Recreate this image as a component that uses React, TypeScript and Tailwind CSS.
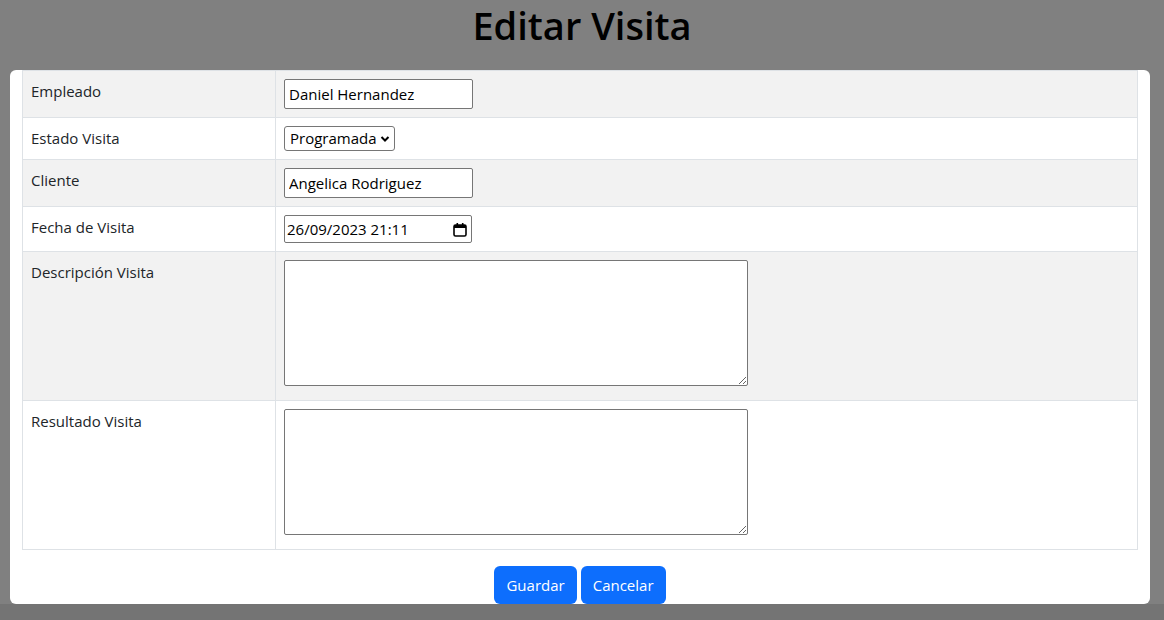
const font = { fontFamily: '"Open Sans", "Noto Sans", sans-serif' };

function Row({
  label,
  shaded,
  children,
}: {
  label: string;
  shaded?: boolean;
  children: React.ReactNode;
}) {
  return (
    <div className={`grid grid-cols-[253px_1fr] border-b border-[#dee2e6] ${shaded ? 'bg-[#f2f2f2]' : 'bg-white'}`}>
      <div className="border-r border-[#dee2e6] px-2 py-2 text-[15px] leading-6 text-[#212529]">{label}</div>
      <div className="px-2 py-2">{children}</div>
    </div>
  );
}

export default function App() {
  return (
    <div className="flex h-[620px] flex-col bg-[#808080]" style={font}>
      {/* Title */}
      <div className="flex h-[70px] items-start justify-center pt-[1px]">
        <h1 className="text-[38px] font-semibold leading-[48px] text-black">Editar Visita</h1>
      </div>

      {/* Card */}
      <div className="ml-[10px] mr-[14px] h-[534px] overflow-hidden rounded-md bg-white px-3">
        <div className="border-x border-t border-[#dee2e6]">
          <Row label="Empleado" shaded>
            <input
              type="text"
              defaultValue="Daniel Hernandez"
              className="h-[30px] w-[189px] rounded-[2px] border border-[#767676] bg-white px-1 text-[15px] text-black outline-none"
            />
          </Row>
          <Row label="Estado Visita">
            <div className="flex h-[25px] w-[111px] items-center justify-between rounded-[3px] border border-[#767676] bg-white pl-[5px] pr-1 text-[15px] text-black">
              <span>Programada</span>
              <svg width="10" height="8" viewBox="0 0 10 8">
                <path d="M1.5 2 L5 5.5 L8.5 2" fill="none" stroke="#000" strokeWidth="2" />
              </svg>
            </div>
          </Row>
          <Row label="Cliente" shaded>
            <input
              type="text"
              defaultValue="Angelica Rodriguez"
              className="h-[30px] w-[189px] rounded-[2px] border border-[#767676] bg-white px-1 text-[15px] text-black outline-none"
            />
          </Row>
          <Row label="Fecha de Visita">
            <div className="flex h-[28px] w-[188px] items-center justify-between rounded-[2px] border border-[#767676] bg-white pl-[2px] pr-[4px] text-[15px] text-black">
              <span>26/09/2023 21:11</span>
              <svg width="14" height="15" viewBox="0 0 14 15">
                <rect x="1" y="3" width="12" height="11" rx="1.5" fill="none" stroke="#000" strokeWidth="1.6" />
                <rect x="1" y="3" width="12" height="3" fill="#000" />
                <rect x="3.5" y="1" width="1.6" height="3" fill="#000" />
                <rect x="8.9" y="1" width="1.6" height="3" fill="#000" />
              </svg>
            </div>
          </Row>
          <Row label="Descripción Visita" shaded>
            <textarea className="mb-[6px] block h-[126px] w-[464px] resize rounded-[2px] border border-[#767676] bg-white outline-none" />
          </Row>
          <Row label="Resultado Visita">
            <textarea className="mb-[6px] block h-[126px] w-[464px] resize rounded-[2px] border border-[#767676] bg-white outline-none" />
          </Row>
        </div>

        {/* Buttons */}
        <div className="mt-4 flex justify-center gap-1">
          <button className="h-[38px] rounded-md bg-[#0d6efd] px-3 text-[15px] text-white">Guardar</button>
          <button className="h-[38px] rounded-md bg-[#0d6efd] px-3 text-[15px] text-white">Cancelar</button>
        </div>
      </div>

      <div className="flex-1 bg-[#747474]" />
    </div>
  );
}
